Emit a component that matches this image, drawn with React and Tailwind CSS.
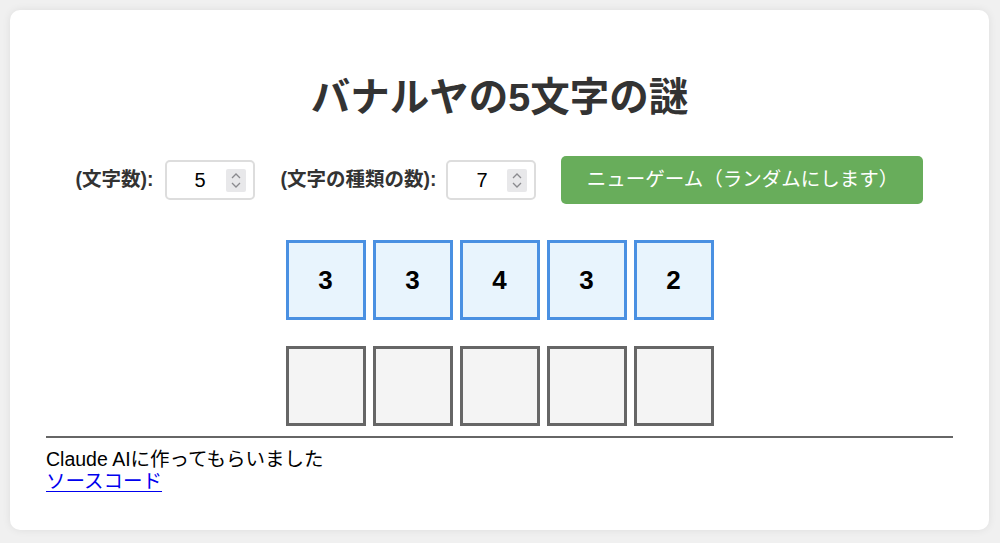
import React from "react";

const font = { fontFamily: '"Liberation Sans", "Noto Sans CJK JP", sans-serif' };

function Spinner() {
  return (
    <div className="w-[20px] h-[23px] bg-[#e8e8ea] rounded-[2px] flex flex-col items-center justify-center gap-[3px]">
      <svg width="10" height="6" viewBox="0 0 10 6"><path d="M1 5 L5 1 L9 5" fill="none" stroke="#8a8a8e" strokeWidth="1.3" /></svg>
      <svg width="10" height="6" viewBox="0 0 10 6"><path d="M1 1 L5 5 L9 1" fill="none" stroke="#8a8a8e" strokeWidth="1.3" /></svg>
    </div>
  );
}

function NumInput({ value }) {
  return (
    <div className="w-[90px] h-[40px] border-2 border-[#dddddd] rounded-[5px] flex items-center pl-[8px] pr-[7px] bg-white">
      <div className="flex-1 text-center text-[20px] text-black">{value}</div>
      <Spinner />
    </div>
  );
}

export default function App() {
  const nums = [3, 3, 4, 3, 2];
  return (
    <div className="min-h-[543px] bg-[#f0f0f0] pt-[10px] pl-[10px]" style={font}>
      <div className="w-[979px] h-[520px] bg-white rounded-[10px] shadow-[0_0_8px_rgba(0,0,0,0.08)] px-[36px] pt-[64px]">
        <h1 className="text-center text-[39.5px] leading-[46px] font-bold text-[#333333]">バナルヤの5文字の謎</h1>
        <div className="mt-[36px] h-[48px] flex items-center justify-center">
          <span className="text-[19.5px] font-bold text-[#333333] mr-[11px]">(文字数):</span>
          <NumInput value="5" />
          <span className="text-[19.5px] font-bold text-[#333333] ml-[26px] mr-[10px]">(文字の種類の数):</span>
          <NumInput value="7" />
          <button className="ml-[25px] w-[362px] h-[48px] bg-[#68ad5b] text-white text-[19.5px] rounded-[5px]">ニューゲーム（ランダムにします）</button>
        </div>
        <div className="mt-[36px] flex justify-center gap-[7px]">
          {nums.map((n, i) => (
            <div key={i} className="w-[80px] h-[80px] border-[3px] border-[#4a90e2] bg-[#e8f4fd] flex items-center justify-center text-[26px] font-bold text-black">{n}</div>
          ))}
        </div>
        <div className="mt-[26px] flex justify-center gap-[7px]">
          {nums.map((n, i) => (
            <div key={i} className="w-[80px] h-[80px] border-[3px] border-[#666666] bg-[#f4f4f4]"></div>
          ))}
        </div>
        <div className="mt-[10px] h-[2px] bg-[#666666]"></div>
        <div className="mt-[10px] text-[19.5px] leading-[22px] text-black">
          <div>Claude AIに作ってもらいました</div>
          <a href="#" className="text-[#0000ee] underline underline-offset-[3px]">ソースコード</a>
        </div>
      </div>
    </div>
  );
}
